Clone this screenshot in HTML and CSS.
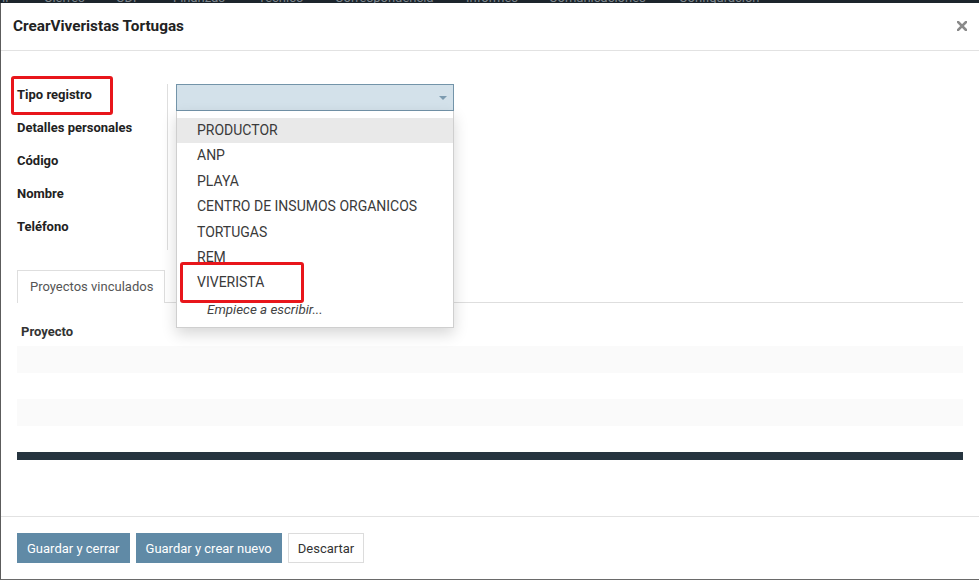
FILE: index.html
```html
<!DOCTYPE html>
<html lang="es">
<head>
<meta charset="utf-8">
<title>CrearViveristas Tortugas</title>
<link rel="stylesheet" href="styles.css">
</head>
<body>
<nav class="topbar">
  <ul class="menu">
    <li class="menu-toggle">ll</li>
    <li>Cierres</li>
    <li>CDP</li>
    <li>Finanzas</li>
    <li>Tecnico</li>
    <li>Correspondencia</li>
    <li>Informes</li>
    <li>Comunicaciones</li>
    <li>Configuracion</li>
  </ul>
</nav>

<div class="modal">
  <header class="modal-header">
    <h4 class="modal-title">CrearViveristas Tortugas</h4>
    <button class="close" type="button" aria-label="Cerrar">
      <svg width="10" height="10" viewBox="0 0 10 10"><path d="M1 1 L9 9 M9 1 L1 9" stroke="#8a8a8a" stroke-width="2.6" stroke-linecap="square"/></svg>
    </button>
  </header>

  <main class="modal-body">
    <div class="form">
      <div class="labels">
        <div class="label"><span class="mark">Tipo registro</span></div>
        <div class="label">Detalles personales</div>
        <div class="label">Código</div>
        <div class="label">Nombre</div>
        <div class="label">Teléfono</div>
      </div>
      <div class="divider"></div>
      <div class="fields">
        <div class="select-wrap">
          <div class="select"><span class="caret"></span></div>
          <ul class="dropdown">
            <li class="option active">PRODUCTOR</li>
            <li class="option">ANP</li>
            <li class="option">PLAYA</li>
            <li class="option">CENTRO DE INSUMOS ORGANICOS</li>
            <li class="option">TORTUGAS</li>
            <li class="option">REM</li>
            <li class="option marked">VIVERISTA</li>
            <li class="option hint">Empiece a escribir...</li>
          </ul>
        </div>
      </div>
    </div>

    <div class="tabs">
      <div class="tab">Proyectos vinculados</div>
    </div>

    <div class="table">
      <div class="thead">Proyecto</div>
      <div class="row odd"></div>
      <div class="row"></div>
      <div class="row odd"></div>
      <div class="row"></div>
      <div class="tfoot"></div>
    </div>
  </main>

  <footer class="modal-footer">
    <button class="btn btn-primary" type="button">Guardar y cerrar</button>
    <button class="btn btn-primary" type="button">Guardar y crear nuevo</button>
    <button class="btn btn-secondary" type="button">Descartar</button>
  </footer>
</div>
</body>
</html>
```

FILE: styles.css
```css
* {
  box-sizing: border-box;
}

html, body {
  margin: 0;
  padding: 0;
}

body {
  width: 979px;
  height: 580px;
  overflow: hidden;
  background: #1c252c;
  font-family: Roboto, "Liberation Sans", sans-serif;
  font-size: 13px;
  color: #333;
}

/* navbar behind the dialog, only its lower edge shows */
.topbar {
  height: 3px;
  overflow: hidden;
  background: #1c252c;
}

.menu {
  list-style: none;
  margin: -10px 0 0 0;
  padding: 0;
  display: flex;
  font-size: 13px;
  line-height: 15px;
  color: #7d868e;
}

.menu-toggle { width: 44px; padding-left: 2px; }
.menu li:nth-child(2) { width: 72px; }
.menu li:nth-child(3) { width: 57px; }
.menu li:nth-child(4) { width: 85px; }
.menu li:nth-child(5) { width: 77px; }
.menu li:nth-child(6) { width: 131px; }
.menu li:nth-child(7) { width: 83px; }
.menu li:nth-child(8) { width: 130px; }

/* dialog */
.modal {
  height: 577px;
  background: #fff;
  border-left: 1px solid #5c5c5c;
  border-bottom: 1px solid #6a6a6a;
  display: flex;
  flex-direction: column;
}

.modal-header {
  height: 48px;
  flex: none;
  display: flex;
  align-items: center;
  justify-content: space-between;
  padding: 0 12px 2px 12px;
  border-bottom: 1px solid #e2e2e2;
}

.modal-title {
  margin: 0;
  font-size: 15.3px;
  font-weight: 700;
  color: #222;
}

.close {
  border: 0;
  background: none;
  padding: 0;
  width: 10px;
  height: 10px;
  display: flex;
}

.modal-body {
  flex: 1;
  padding: 27px 16px 0 16px;
}

/* form */
.form {
  display: flex;
  align-items: flex-start;
}

.labels {
  width: 150px;
  flex: none;
}

.label {
  height: 33px;
  line-height: 33px;
  font-weight: 700;
  color: #222;
  white-space: nowrap;
}

.mark {
  position: relative;
  display: inline-block;
}

.mark::after {
  content: "";
  position: absolute;
  left: -6px;
  top: -2px;
  width: 96px;
  height: 33px;
  border: 3px solid #e8161b;
  border-radius: 3px;
}

.divider {
  width: 1px;
  height: 166px;
  margin-top: 6px;
  background: #dedede;
  flex: none;
}

.fields {
  padding-left: 8px;
  padding-top: 6px;
}

.select-wrap {
  position: relative;
  width: 278px;
}

.select {
  height: 27px;
  background: #d3e1ea;
  border: 1px solid #7394a9;
  position: relative;
}

.caret {
  position: absolute;
  right: 6px;
  top: 11px;
  width: 0;
  height: 0;
  border-left: 4px solid transparent;
  border-right: 4px solid transparent;
  border-top: 4px solid #7c9bb0;
}

.dropdown {
  position: absolute;
  top: 100%;
  left: 0;
  width: 278px;
  margin: 0;
  padding: 7px 0 6px 0;
  list-style: none;
  background: #fff;
  border: 1px solid #cfcfcf;
  border-top: 0;
  box-shadow: 0 6px 14px rgba(0, 0, 0, 0.16);
  z-index: 5;
}

.option {
  height: 25.4px;
  line-height: 25.4px;
  padding-left: 20px;
  font-size: 14px;
  color: #3a3a3a;
  white-space: nowrap;
}

.option.active {
  background: #e9e9e9;
}

.option.marked {
  position: relative;
}

.option.marked::after {
  content: "";
  position: absolute;
  left: 3px;
  top: -8px;
  width: 118px;
  height: 35px;
  border: 3px solid #e8161b;
  border-radius: 3px;
}

.option.hint {
  padding-left: 30px;
  padding-top: 1px;
  font-size: 13.4px;
  font-style: italic;
  color: #444;
}

/* tabs */
.tabs {
  margin-top: 20px;
  display: flex;
  border-bottom: 1px solid #dedede;
}

.tab {
  width: 148px;
  height: 33px;
  line-height: 32px;
  padding-left: 12px;
  border: 1px solid #dedede;
  border-bottom: 0;
  color: #555;
  margin-bottom: -1px;
  background: #fff;
}

/* list of linked projects */
.table {
  margin-top: 14px;
}

.thead {
  height: 29px;
  line-height: 29px;
  padding-left: 4px;
  font-weight: 700;
  color: #333;
}

.row {
  height: 26.6px;
}

.row.odd {
  background: #fafafa;
}

.tfoot {
  height: 8px;
  background: #26343f;
}

/* footer */
.modal-footer {
  flex: none;
  height: 63px;
  border-top: 1px solid #e2e2e2;
  padding: 16px 16px 0 16px;
  display: flex;
  gap: 6px;
  align-items: flex-start;
}

.btn {
  height: 30px;
  padding: 0 9px;
  font-family: Roboto, "Liberation Sans", sans-serif;
  font-size: 13px;
  border-radius: 0;
  cursor: pointer;
}

.btn-primary {
  background: #608aa6;
  border: 1px solid #608aa6;
  color: #fff;
}

.btn-secondary {
  background: #fff;
  border: 1px solid #dcdcdc;
  color: #333;
}
```
